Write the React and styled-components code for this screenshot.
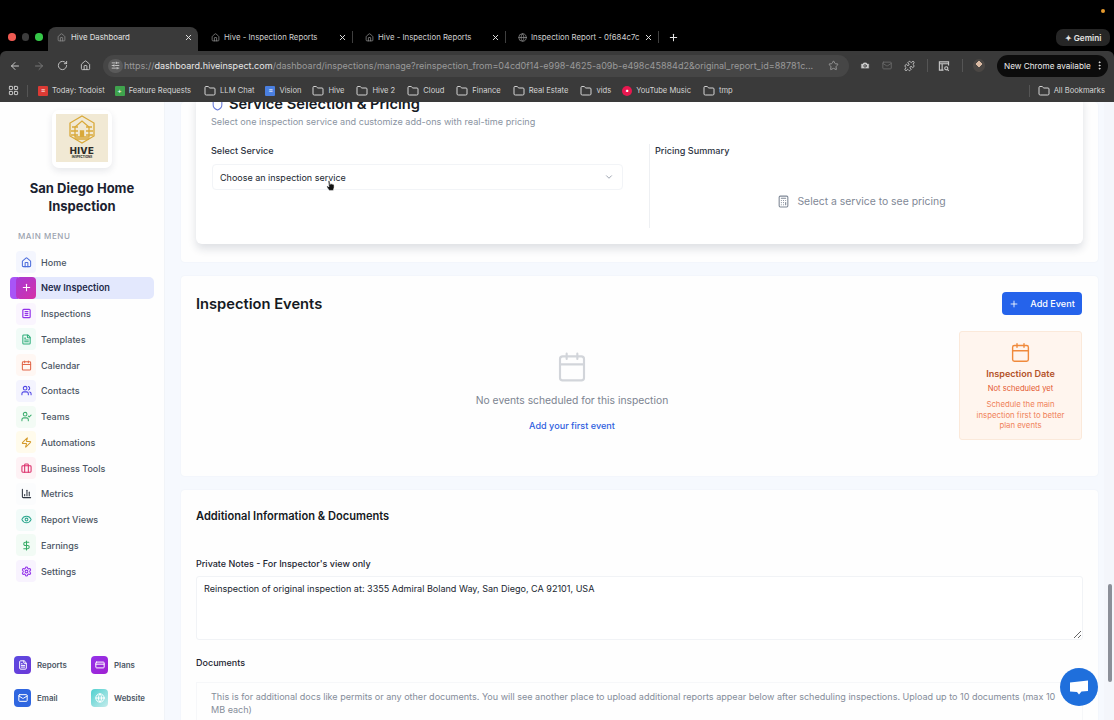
import React from 'react';
import styled, { createGlobalStyle } from 'styled-components';
import {
  ArrowLeft,
  ArrowRight,
  BarChart3,
  Briefcase,
  Calculator,
  Calendar,
  Camera,
  ChevronDown,
  CreditCard,
  DollarSign,
  Eye,
  FileText,
  Folder,
  Globe,
  Home,
  House,
  LayoutGrid,
  Mail,
  MoreVertical,
  Plus,
  Puzzle,
  RotateCw,
  Settings,
  Shield,
  SlidersHorizontal,
  Star,
  UserCheck,
  Users,
  X,
  Zap,
} from 'lucide-react';

const GlobalStyle = createGlobalStyle`
  html, body {
    margin: 0;
    padding: 0;
    height: 100%;
    overflow: hidden;
    font-family: Inter, "Noto Sans", sans-serif;
  }
  * {
    box-sizing: border-box;
  }
`;

const Page = styled.div`
  position: relative;
  width: 1114px;
  height: 720px;
  display: flex;
  flex-direction: column;
  overflow: hidden;
  background: #f6f9fe;
`;

/* browser chrome */
const Chrome = styled.header`
  height: 102px;
  flex: none;
  display: flex;
  flex-direction: column;
  background: #000;
`;

const TabStrip = styled.div`
  height: 51px;
  padding: 27px 4px 0 7px;
  display: flex;
  align-items: stretch;
  position: relative;
`;

const Lights = styled.div`
  width: 41px;
  display: flex;
  align-items: center;
  gap: 6px;
  padding-bottom: 4px;
  padding-left: 1px;
`;

const Light = styled.span`
  width: 7.5px;
  height: 7.5px;
  border-radius: 50%;
  background: ${(props) => props.$color};
`;

const Tab = styled.div`
  width: ${(props) => props.$width}px;
  height: 24px;
  padding: 0 5px 4px ${(props) => (props.$active ? 9 : 13)}px;
  display: flex;
  align-items: center;
  gap: ${(props) => (props.$active ? 5 : 4)}px;
  color: #d6d6d6;
  font-size: 7.8px;
  border-radius: 8px 8px 0 0;
  background: ${(props) => (props.$active ? '#3a3a3a' : 'transparent')};
  position: relative;
  &::after {
    content: '';
    display: ${(props) => (props.$active ? 'none' : 'block')};
    position: absolute;
    right: -1px;
    top: 4px;
    height: 12px;
    width: 1px;
    background: #3f3f3f;
  }
`;

const TabTitle = styled.span`
  flex: 1;
  white-space: nowrap;
  color: ${(props) => (props.$active ? '#e2e2e2' : '#cfcfcf')};
`;

const NewTab = styled.div`
  width: 30px;
  height: 20px;
  display: flex;
  align-items: center;
  justify-content: center;
  color: #e6e6e6;
`;

const Gemini = styled.div`
  margin-left: auto;
  margin-top: 2px;
  width: 54px;
  height: 17px;
  border-radius: 7px;
  background: #262626;
  color: #e4e4e4;
  display: flex;
  align-items: center;
  justify-content: center;
  gap: 3px;
  font-size: 8.2px;
  font-weight: 600;
`;

const Dot = styled.span`
  position: absolute;
  top: 9px;
  right: 9px;
  width: 4px;
  height: 4px;
  border-radius: 50%;
  background: #e69a2e;
`;

const Toolbar = styled.div`
  height: 31px;
  padding: 0 6px 2px 9px;
  background: #3a3a3a;
  border-radius: 6px 6px 0 0;
  display: flex;
  align-items: center;
  color: #c9c9c9;
`;

const NavButtons = styled.div`
  width: 94px;
  flex: none;
  display: flex;
  align-items: center;
  gap: 12px;
`;

const Omnibox = styled.div`
  width: 746px;
  flex: none;
  height: 22px;
  border-radius: 11px;
  background: #464646;
  display: flex;
  align-items: center;
  padding: 0 10px 0 5px;
  font-size: 9.04px;
  color: #9a9a9a;
`;

const SiteInfo = styled.span`
  width: 15px;
  height: 14px;
  margin-right: 1px;
  display: flex;
  align-items: center;
  justify-content: center;
  border-radius: 7px;
  background: #5a5a5a;
  color: #e2e2e2;
`;

const UrlText = styled.span`
  flex: 1;
  white-space: nowrap;
  b {
    font-weight: 400;
    color: #e8e8e8;
  }
`;

const ToolIcons = styled.div`
  display: flex;
  align-items: center;
  padding-left: 11px;
  gap: 12px;
  flex: 1;
  min-width: 0;
`;

const ToolSep = styled.span`
  width: 1px;
  height: 13px;
  margin-right: -2px;
  background: #555;
`;

const Avatar = styled.span`
  width: 13px;
  height: 13px;
  border-radius: 50%;
  background: radial-gradient(circle at 50% 38%, #d9b9a2 0 26%, #4b4744 28% 100%);
`;

const UpdatePill = styled.div`
  margin-left: auto;
  width: 111px;
  height: 22px;
  flex: none;
  border-radius: 11px;
  background: #0c0c0c;
  color: #ececec;
  font-size: 8.2px;
  display: flex;
  align-items: center;
  justify-content: space-between;
  padding: 0 3px 0 7px;
  white-space: nowrap;
`;

const Bookmarks = styled.div`
  height: 20px;
  padding: 0 9px 3px 8px;
  background: #3a3a3a;
  display: flex;
  align-items: center;
  color: #d4d4d4;
  font-size: 7.6px;
`;

const Bookmark = styled.span`
  display: flex;
  align-items: center;
  gap: ${(props) => props.$gap || 4}px;
  margin-left: ${(props) => props.$left || 0}px;
  white-space: nowrap;
`;

const Favicon = styled.span`
  width: 10px;
  height: 10px;
  border-radius: ${(props) => props.$radius || 1}px;
  background: ${(props) => props.$color};
  color: #fff;
  display: flex;
  align-items: center;
  justify-content: center;
  font-size: 7px;
  line-height: 1;
`;

const BarSep = styled.span`
  width: 1px;
  height: 12px;
  background: #555;
  margin: ${(props) => props.$margin};
`;

/* page body */
const Body = styled.div`
  flex: 1;
  min-height: 0;
  display: flex;
`;

const Sidebar = styled.aside`
  width: 165px;
  flex: none;
  background: #fefefe;
  display: flex;
  flex-direction: column;
  border-right: 1px solid #f1f4f8;
`;

const LogoCard = styled.div`
  width: 60px;
  height: 58px;
  margin: 8px auto 0;
  padding: 4px;
  background: #fff;
  border-radius: 7px;
  box-shadow: 0 3px 7px rgba(30, 40, 70, 0.1);
`;

const LogoTile = styled.div`
  height: 48px;
  background: #f1e9d4;
  display: flex;
  flex-direction: column;
  align-items: center;
  padding-top: 1px;
  color: #2b2a26;
`;

const LogoWord = styled.span`
  margin-top: 2px;
  font-size: 9.5px;
  font-weight: 800;
  line-height: 9px;
  letter-spacing: 0.4px;
`;

const LogoSmall = styled.span`
  font-size: 3px;
  font-weight: 700;
  line-height: 4px;
`;

const Brand = styled.h1`
  margin: 11px 0 0;
  padding: 0 8px;
  font-size: 13px;
  line-height: 18px;
  font-weight: 700;
  color: #1b2230;
  text-align: center;
`;

const MenuLabel = styled.div`
  margin: 15px 0 0 18px;
  font-size: 8px;
  line-height: 12px;
  font-weight: 500;
  letter-spacing: 0.55px;
  color: #9ca3af;
`;

const Menu = styled.nav`
  margin-top: 9px;
  display: flex;
  flex-direction: column;
  gap: 3.78px;
  padding: 0 10px 0 16px;
`;

const MenuItem = styled.div`
  position: relative;
  height: 22px;
  display: flex;
  align-items: center;
  gap: 5px;
  border-radius: 5px;
  font-size: ${(props) => (props.$active ? 9.2 : 9)}px;
  font-weight: ${(props) => (props.$active ? 600 : 500)};
  color: ${(props) => (props.$active ? '#1e2a4a' : '#4b5563')};
  background: ${(props) => (props.$active ? '#e3e8fd' : 'transparent')};
`;

const ActiveBar = styled.span`
  position: absolute;
  left: -6px;
  top: 0;
  width: 8px;
  height: 22px;
  border-radius: 4px 0 0 4px;
  background: #a855f7;
`;

const MenuIcon = styled.span`
  position: relative;
  width: 20px;
  height: 22px;
  border-radius: 4px;
  display: flex;
  align-items: center;
  justify-content: center;
  background: ${(props) => props.$bg};
  color: ${(props) => props.$color};
`;

const QuickLinks = styled.div`
  margin-top: auto;
  padding: 0 0 13px 14px;
  display: grid;
  grid-template-columns: 77px 1fr;
  row-gap: 15px;
`;

const QuickLink = styled.div`
  display: flex;
  align-items: center;
  gap: 6px;
  font-size: 7.9px;
  font-weight: 600;
  color: #4b5563;
`;

const QuickIcon = styled.span`
  width: 17px;
  height: 18px;
  border-radius: 4px;
  background: ${(props) => props.$bg};
  color: #fff;
  display: flex;
  align-items: center;
  justify-content: center;
`;

const Main = styled.main`
  flex: 1;
  min-width: 0;
  padding: 0 6px 0 16px;
  overflow: hidden;
  display: flex;
  flex-direction: column;
  gap: 14px;
`;

const Panel = styled.section`
  flex: none;
  background: #fefefe;
  border-radius: 4px;
  padding: ${(props) => props.$padding};
  box-shadow: 0 0 2px rgba(30, 50, 90, 0.05);
`;

const InnerCard = styled.div`
  padding: 0 15px 16px;
  border-radius: 6px;
  background: #fff;
  box-shadow: 0 5px 9px rgba(30, 40, 70, 0.14);
`;

const ServiceHead = styled.div`
  margin-top: -8px;
  display: flex;
  align-items: center;
  gap: 5px;
  height: 20px;
  color: #6a7bd8;
`;

const SectionTitle = styled.h2`
  margin: 0;
  font-size: ${(props) => props.$size || 14.7}px;
  line-height: 20px;
  font-weight: 600;
  color: #151a23;
`;

const Sub = styled.p`
  margin: 1px 0 15px;
  font-size: 9.1px;
  line-height: 14px;
  color: #8a93a1;
`;

const ServiceGrid = styled.div`
  display: grid;
  grid-template-columns: 439px 1fr;
  height: 84px;
`;

const LeftCol = styled.div`
  padding-right: 26px;
  border-right: 1px solid #eef0f3;
`;

const RightCol = styled.div`
  padding-left: 5px;
  display: flex;
  flex-direction: column;
`;

const FieldLabel = styled.div`
  font-size: 9.1px;
  line-height: 14px;
  font-weight: 500;
  color: #2b3240;
`;

const SelectBox = styled.div`
  position: relative;
  height: 26px;
  margin: 6px 0 0 1px;
  padding: 0 8px 0 7px;
  border: 1px solid #f2f4f7;
  border-radius: 4px;
  display: flex;
  align-items: center;
  justify-content: space-between;
  font-size: 9px;
  color: #20262f;
`;

const Cursor = styled.svg`
  position: absolute;
  left: 113px;
  top: 15px;
`;

const PricingEmpty = styled.div`
  margin-top: 37px;
  display: flex;
  align-items: center;
  justify-content: center;
  gap: 7px;
  font-size: 10.4px;
  color: #7f8896;
`;

const EventsHead = styled.div`
  display: flex;
  align-items: center;
  justify-content: space-between;
  height: 23px;
  padding-right: 1px;
`;

const AddButton = styled.button`
  width: 80px;
  height: 23px;
  border: none;
  border-radius: 4px;
  background: #2563eb;
  color: #fff;
  font: 500 9.1px Inter, sans-serif;
  display: flex;
  align-items: center;
  justify-content: center;
  gap: 11px;
`;

const EventsBody = styled.div`
  margin-top: 16px;
  display: flex;
  gap: 11px;
`;

const EmptyState = styled.div`
  flex: 1;
  padding-top: 20px;
  display: flex;
  flex-direction: column;
  align-items: center;
  color: #d2d5da;
`;

const EmptyText = styled.div`
  margin-top: 7px;
  font-size: 10.3px;
  line-height: 20px;
  color: #7c8491;
`;

const EmptyLink = styled.a`
  margin-top: 9px;
  font-size: 9.1px;
  line-height: 14px;
  font-weight: 500;
  color: #2f5fe0;
`;

const DateCard = styled.div`
  width: 123px;
  height: 109px;
  margin-right: 1px;
  padding-top: 10px;
  border: 1px solid #fbe9da;
  border-radius: 3px;
  background: #fff5ee;
  display: flex;
  flex-direction: column;
  align-items: center;
  text-align: center;
  color: #f08a3c;
`;

const DateTitle = styled.div`
  margin-top: 4px;
  font-size: 9.1px;
  line-height: 14px;
  font-weight: 600;
  color: #b4532a;
`;

const DateStatus = styled.div`
  margin-top: 2px;
  font-size: 7.6px;
  line-height: 12px;
  color: #e4572e;
`;

const DateHint = styled.div`
  margin-top: 4px;
  padding: 0 10px;
  font-size: 7.8px;
  line-height: 10.5px;
  color: #f0825a;
`;

const NotesLabel = styled(FieldLabel)`
  margin-top: ${(props) => props.$top}px;
  font-size: 9px;
  color: #1c2430;
`;

const Notes = styled.textarea`
  display: block;
  width: 887px;
  height: 64px;
  margin-top: 5px;
  padding: 5px 8px 6px 7px;
  border: 1px solid #f1f3f6;
  border-radius: 3px;
  background: #fff;
  font: 9.05px/13px Inter, sans-serif;
  color: #20262f;
  outline: none;
  resize: vertical;
`;

const DocsBox = styled.div`
  margin-top: 12px;
  padding: 7px 14px;
  border: 1px solid #f6f7f9;
  font-size: 9.05px;
  line-height: 13px;
  color: #858d9a;
`;

const Scrollbar = styled.div`
  width: 10px;
  flex: none;
  padding: 482px 2px 0 4px;
  background: #f4f6fb;
`;

const Thumb = styled.div`
  height: 98px;
  border-radius: 2px;
  background: #8b8f98;
`;

const ChatBubble = styled.div`
  position: absolute;
  right: 16px;
  bottom: 14px;
  width: 38px;
  height: 38px;
  border-radius: 50%;
  background: #1f6fdc;
  display: flex;
  align-items: center;
  justify-content: center;
`;

const InspectionsIcon = ({ size }) => (
  <svg width={size} height={size} viewBox="0 0 24 24" fill="none" stroke="currentColor" strokeWidth="2.6" strokeLinecap="round">
    <rect x="4" y="3" width="16" height="18" rx="2" />
    <path d="M9 8h6M9 12h6M9 16h6" />
  </svg>
);

const SearchPanelIcon = () => (
  <svg width="13" height="12" viewBox="0 0 13 12" fill="none" stroke="currentColor" strokeWidth="1.2">
    <path d="M6 10.500H1.500v-9h10v4" />
    <path d="M1.500 3.500h10M4.500 3.500v7" />
    <circle cx="9" cy="8.500" r="1.700" />
    <path d="m10.300 9.800 1.400 1.400" />
  </svg>
);

const menuItems = [
  { label: 'Home', icon: Home, color: '#4f6fdc', bg: '#f4f6fe' },
  { label: 'New Inspection', icon: Plus, color: '#fff', bg: 'linear-gradient(135deg, #a63ad6, #d62fa6)', active: true },
  { label: 'Inspections', icon: InspectionsIcon, color: '#9333ea', bg: '#faf5fe' },
  { label: 'Templates', icon: FileText, color: '#2fae7b', bg: '#f1fbf7' },
  { label: 'Calendar', icon: Calendar, color: '#e2674a', bg: '#fff7f3' },
  { label: 'Contacts', icon: Users, color: '#4f46e5', bg: '#f4f4fe' },
  { label: 'Teams', icon: UserCheck, color: '#3fae70', bg: '#f3fbf5' },
  { label: 'Automations', icon: Zap, color: '#d49a2a', bg: '#fffbec' },
  { label: 'Business Tools', icon: Briefcase, color: '#db2f6b', bg: '#fef2f5' },
  { label: 'Metrics', icon: BarChart3, color: '#2e3440', bg: '#fbfcfd' },
  { label: 'Report Views', icon: Eye, color: '#2fa890', bg: '#f2fbf9' },
  { label: 'Earnings', icon: DollarSign, color: '#37ab66', bg: '#f2fbf5' },
  { label: 'Settings', icon: Settings, color: '#9333ea', bg: '#f8f3fe' },
];

const quickLinks = [
  { label: 'Reports', icon: FileText, bg: 'linear-gradient(135deg, #5b4be0, #6d38d8)' },
  { label: 'Plans', icon: CreditCard, bg: 'linear-gradient(135deg, #9333ea, #a020d0)' },
  { label: 'Email', icon: Mail, bg: '#2f66e0' },
  { label: 'Website', icon: Globe, bg: 'linear-gradient(135deg, #4fd0cf, #c5ecec)' },
];

const tabs = [
  { id: 'dash', title: 'Hive Dashboard', width: 150, active: true, icon: House },
  { id: 'rep1', title: 'Hive - Inspection Reports', width: 154, icon: House },
  { id: 'rep2', title: 'Hive - Inspection Reports', width: 153, icon: House },
  { id: 'rep3', title: 'Inspection Report - 0f684c7c', width: 153, icon: Globe },
];

const folders = [
  { label: 'Hive', left: 11 },
  { label: 'Hive 2', left: 12 },
  { label: 'Cloud', left: 12 },
  { label: 'Finance', left: 12 },
  { label: 'Real Estate', left: 12 },
  { label: 'vids', left: 12 },
];

const HiveMark = () => (
  <svg width="30" height="29" viewBox="0 0 30 29" fill="none" stroke="#d9a93a" strokeWidth="1.3">
    <path d="M15 1 27 8v13l-12 7-12-7V8z" />
    <path d="M5 12h6M19 12h6M4 16h7M19 16h7M4 20h7M19 20h7M8 24h14" />
    <path d="M8 12 15 6l7 6v10H8z" />
    <path d="M13.5 22v-6h3v6" fill="#d9a93a" />
  </svg>
);

const HandCursor = () => (
  <Cursor width="10" height="12" viewBox="0 0 10 12">
    <path
      d="M2.4.9c.6-.5 1.3 0 1.4.7l.2 3 .3-.8c.4-.5 1.1-.3 1.2.3.4-.4 1.1-.3 1.2.3.5-.3 1.2 0 1.3.6.2 1.400.2 3-.4 4.200l-.4 1.200H3.200L1 7.200c-.4-.8.3-1.400 1-1L3 7 2.200 1.800c0-.4 0-.7.2-.9z"
      fill="#111"
      stroke="#fff"
      strokeWidth=".5"
    />
  </Cursor>
);

const App = () => {
  return (
    <Page>
      <GlobalStyle />
      <Chrome>
        <TabStrip>
          <Lights>
            <Light $color="#ee5a52" />
            <Light $color="#3c3c3c" />
            <Light $color="#35c748" />
          </Lights>
          {tabs.map((tab) => {
            const TabIcon = tab.icon;
            return (
              <Tab key={tab.id} $width={tab.width} $active={tab.active}>
                <TabIcon size={9} color="#8d8d8d" />
                <TabTitle $active={tab.active}>{tab.title}</TabTitle>
                <X size={9} color="#e6e6e6" strokeWidth={2.5} />
              </Tab>
            );
          })}
          <NewTab>
            <Plus size={11} strokeWidth={2.2} />
          </NewTab>
          <Gemini>✦ Gemini</Gemini>
          <Dot />
        </TabStrip>
        <Toolbar>
          <NavButtons>
            <ArrowLeft size={12} />
            <ArrowRight size={12} color="#777" />
            <RotateCw size={11} />
            <House size={11} />
          </NavButtons>
          <Omnibox>
            <SiteInfo>
              <SlidersHorizontal size={9} />
            </SiteInfo>
            <UrlText>
              https://<b>dashboard.hiveinspect.com</b>/dashboard/inspections/manage?reinspection_from=04cd0f14-e998-4625-a09b-e498c45884d2&amp;original_report_id=88781c...
            </UrlText>
            <Star size={11} />
          </Omnibox>
          <ToolIcons>
            <Camera size={11} fill="#c9c9c9" stroke="#3a3a3a" />
            <Mail size={11} color="#6d6d6d" />
            <Puzzle size={12} />
            <ToolSep />
            <SearchPanelIcon />
            <ToolSep />
            <Avatar />
            <UpdatePill>
              New Chrome available
              <MoreVertical size={11} />
            </UpdatePill>
          </ToolIcons>
        </Toolbar>
        <Bookmarks>
          <LayoutGrid size={11} />
          <BarSep $margin="0 8px 0 8px" />
          <Bookmark $left={2}>
            <Favicon $color="#db3a34">≡</Favicon>Today: Todoist
          </Bookmark>
          <Bookmark $left={10}>
            <Favicon $color="#3fa34d">+</Favicon>Feature Requests
          </Bookmark>
          <Bookmark $left={13}>
            <Folder size={12} />
            LLM Chat
          </Bookmark>
          <Bookmark $left={11}>
            <Favicon $color="#4a7fe0">≡</Favicon>Vision
          </Bookmark>
          {folders.map((item) => (
            <Bookmark key={item.label} $left={item.left}>
              <Folder size={12} />
              {item.label}
            </Bookmark>
          ))}
          <Bookmark $left={11}>
            <Favicon $color="#e8184f" $radius={5}>•</Favicon>YouTube Music
          </Bookmark>
          <Bookmark $left={12}>
            <Folder size={12} />
            tmp
          </Bookmark>
          <BarSep $margin="0 8px 0 auto" />
          <Bookmark>
            <Folder size={12} />
            All Bookmarks
          </Bookmark>
        </Bookmarks>
      </Chrome>

      <Body>
        <Sidebar>
          <LogoCard>
            <LogoTile>
              <HiveMark />
              <LogoWord>HIVE</LogoWord>
              <LogoSmall>INSPECTIONS</LogoSmall>
            </LogoTile>
          </LogoCard>
          <Brand>San Diego Home Inspection</Brand>
          <MenuLabel>MAIN MENU</MenuLabel>
          <Menu>
            {menuItems.map((item) => {
              const ItemIcon = item.icon;
              return (
                <MenuItem key={item.label} $active={item.active}>
                  {item.active && <ActiveBar />}
                  <MenuIcon $bg={item.bg} $color={item.color}>
                    <ItemIcon size={11} strokeWidth={2.3} />
                  </MenuIcon>
                  {item.label}
                </MenuItem>
              );
            })}
          </Menu>
          <QuickLinks>
            {quickLinks.map((item) => {
              const LinkIcon = item.icon;
              return (
                <QuickLink key={item.label}>
                  <QuickIcon $bg={item.bg}>
                    <LinkIcon size={10} strokeWidth={2.4} />
                  </QuickIcon>
                  {item.label}
                </QuickLink>
              );
            })}
          </QuickLinks>
        </Sidebar>

        <Main>
          <Panel $padding="0 15px 18px">
            <InnerCard>
              <ServiceHead>
                <Shield size={13} />
                <SectionTitle>Service Selection &amp; Pricing</SectionTitle>
              </ServiceHead>
              <Sub>Select one inspection service and customize add-ons with real-time pricing</Sub>
              <ServiceGrid>
                <LeftCol>
                  <FieldLabel>Select Service</FieldLabel>
                  <SelectBox>
                    Choose an inspection service
                    <ChevronDown size={10} color="#8a93a1" />
                    <HandCursor />
                  </SelectBox>
                </LeftCol>
                <RightCol>
                  <FieldLabel>Pricing Summary</FieldLabel>
                  <PricingEmpty>
                    <Calculator size={13} />
                    Select a service to see pricing
                  </PricingEmpty>
                </RightCol>
              </ServiceGrid>
            </InnerCard>
          </Panel>

          <Panel $padding="16px 15px 36px">
            <EventsHead>
              <SectionTitle>Inspection Events</SectionTitle>
              <AddButton>
                <Plus size={10} />
                Add Event
              </AddButton>
            </EventsHead>
            <EventsBody>
              <EmptyState>
                <Calendar size={32} strokeWidth={1.6} />
                <EmptyText>No events scheduled for this inspection</EmptyText>
                <EmptyLink>Add your first event</EmptyLink>
              </EmptyState>
              <DateCard>
                <Calendar size={21} strokeWidth={1.6} />
                <DateTitle>Inspection Date</DateTitle>
                <DateStatus>Not scheduled yet</DateStatus>
                <DateHint>Schedule the main inspection first to better plan events</DateHint>
              </DateCard>
            </EventsBody>
          </Panel>

          <Panel $padding="16px 15px 20px">
            <SectionTitle $size={11.1}>Additional Information &amp; Documents</SectionTitle>
            <NotesLabel $top={31}>Private Notes - For Inspector's view only</NotesLabel>
            <Notes
              readOnly
              defaultValue="Reinspection of original inspection at: 3355 Admiral Boland Way, San Diego, CA 92101, USA"
            />
            <NotesLabel $top={16}>Documents</NotesLabel>
            <DocsBox>
              This is for additional docs like permits or any other documents. You will see another place to upload additional reports appear below after scheduling inspections. Upload up to 10 documents (max 10 MB each)
            </DocsBox>
          </Panel>
        </Main>

        <Scrollbar>
          <Thumb />
        </Scrollbar>
      </Body>

      <ChatBubble>
        <svg width="20" height="17" viewBox="0 0 20 17">
          <path d="M1 3.500 19 1.500v10.500l-6.500.6L10 15.500l-2-2.600-7-.4z" fill="#fff" />
        </svg>
      </ChatBubble>
    </Page>
  );
};

export default App;
